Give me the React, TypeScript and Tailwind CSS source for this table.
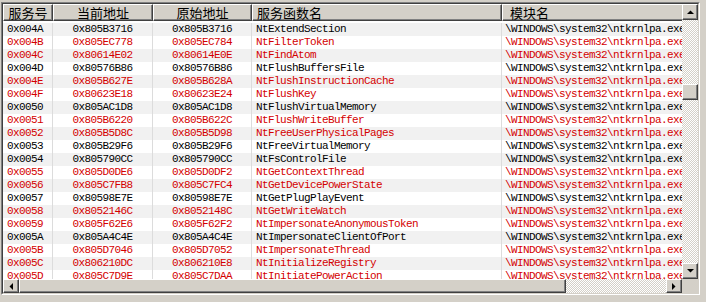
import React from "react";

type Row = { id: string; cur: string; orig: string; name: string };

const rows: Row[] = [
  { id: "0x004A", cur: "0x805B3716", orig: "0x805B3716", name: "NtExtendSection" },
  { id: "0x004B", cur: "0x805EC778", orig: "0x805EC784", name: "NtFilterToken" },
  { id: "0x004C", cur: "0x80614E02", orig: "0x80614E0E", name: "NtFindAtom" },
  { id: "0x004D", cur: "0x80576B86", orig: "0x80576B86", name: "NtFlushBuffersFile" },
  { id: "0x004E", cur: "0x805B627E", orig: "0x805B628A", name: "NtFlushInstructionCache" },
  { id: "0x004F", cur: "0x80623E18", orig: "0x80623E24", name: "NtFlushKey" },
  { id: "0x0050", cur: "0x805AC1D8", orig: "0x805AC1D8", name: "NtFlushVirtualMemory" },
  { id: "0x0051", cur: "0x805B6220", orig: "0x805B622C", name: "NtFlushWriteBuffer" },
  { id: "0x0052", cur: "0x805B5D8C", orig: "0x805B5D98", name: "NtFreeUserPhysicalPages" },
  { id: "0x0053", cur: "0x805B29F6", orig: "0x805B29F6", name: "NtFreeVirtualMemory" },
  { id: "0x0054", cur: "0x805790CC", orig: "0x805790CC", name: "NtFsControlFile" },
  { id: "0x0055", cur: "0x805D0DE6", orig: "0x805D0DF2", name: "NtGetContextThread" },
  { id: "0x0056", cur: "0x805C7FB8", orig: "0x805C7FC4", name: "NtGetDevicePowerState" },
  { id: "0x0057", cur: "0x80598E7E", orig: "0x80598E7E", name: "NtGetPlugPlayEvent" },
  { id: "0x0058", cur: "0x8052146C", orig: "0x8052148C", name: "NtGetWriteWatch" },
  { id: "0x0059", cur: "0x805F62E6", orig: "0x805F62F2", name: "NtImpersonateAnonymousToken" },
  { id: "0x005A", cur: "0x805A4C4E", orig: "0x805A4C4E", name: "NtImpersonateClientOfPort" },
  { id: "0x005B", cur: "0x805D7046", orig: "0x805D7052", name: "NtImpersonateThread" },
  { id: "0x005C", cur: "0x806210DC", orig: "0x806210E8", name: "NtInitializeRegistry" },
  { id: "0x005D", cur: "0x805C7D9E", orig: "0x805C7DAA", name: "NtInitiatePowerAction" },
];

const mono = "font-['SimSun','Liberation_Mono',monospace] text-[11px] tracking-[-0.6px] leading-[13px]";
const cjk = "font-['Noto_Sans_CJK_SC',sans-serif] text-[13px] leading-[16px]";
const track = "bg-[repeating-conic-gradient(#d4d0c8_0_25%,#ffffff_0_50%)] bg-[length:2px_2px]";
const raised = "bg-[#d4d0c8] border border-t-white border-l-white border-r-[#404040] border-b-[#404040] shadow-[inset_-1px_-1px_0_#808080]";

function Arrow({ dir }: { dir: "up" | "down" | "left" | "right" }) {
  const pts = {
    up: "0,4 3.5,0.5 7,4",
    down: "0,0 3.5,3.5 7,0",
    left: "4,0 0.5,3.5 4,7",
    right: "0,0 3.5,3.5 0,7",
  }[dir];
  const vert = dir === "up" || dir === "down";
  return (
    <svg width={vert ? 7 : 4} height={vert ? 4 : 7}>
      <polygon points={pts} fill="#000" />
    </svg>
  );
}

function Btn({ dir, cls }: { dir: "up" | "down" | "left" | "right"; cls: string }) {
  return (
    <div className={`${raised} ${cls} flex items-center justify-center shrink-0`}>
      <Arrow dir={dir} />
    </div>
  );
}

export default function App() {
  return (
    <div className="w-[706px] h-[302px] bg-[#d4d0c8] pt-[2px] pl-[1px] overflow-hidden">
      <div className="w-[699px] h-[293px] border border-t-[#808080] border-l-[#808080] border-r-white border-b-white">
        <div className="grid grid-cols-[679px_16px] grid-rows-[275px_14px] w-[697px] h-[291px] border border-t-[#404040] border-l-[#404040] border-r-[#d4d0c8] border-b-[#d4d0c8]">
          {/* list */}
          <div className="overflow-hidden bg-white">
            <div className="w-[760px]">
              <div className={`flex h-[17px] ${cjk} text-black`}>
                <div className={`${raised} w-[50px] flex items-center justify-center`}>服务号</div>
                <div className={`${raised} w-[100px] flex items-center justify-center`}>当前地址</div>
                <div className={`${raised} w-[99px] flex items-center justify-center`}>原始地址</div>
                <div className={`${raised} w-[250px] flex items-center pl-[4px]`}>服务函数名</div>
                <div className={`${raised} w-[250px] flex items-center pl-[7px]`}>模块名</div>
              </div>
              {rows.map((r, i) => {
                const red = r.cur !== r.orig;
                return (
                  <div
                    key={r.id}
                    className={`flex h-[13px] ${mono} ${red ? "text-[#d40000]" : "text-black"} ${i % 2 === 0 ? "bg-[#f1f1f1]" : "bg-white"} ${i === 0 ? "mt-[2px]" : ""}`}
                  >
                    <div className="w-[50px] pl-[4px] border-r border-[#dcdcdc] whitespace-nowrap">{r.id}</div>
                    <div className="w-[100px] text-center border-r border-[#dcdcdc] whitespace-nowrap">{r.cur}</div>
                    <div className="w-[99px] text-center border-r border-[#dcdcdc] whitespace-nowrap">{r.orig}</div>
                    <div className="w-[250px] pl-[4px] border-r border-[#dcdcdc] whitespace-nowrap">{r.name}</div>
                    <div className="w-[250px] pl-[3px] whitespace-nowrap">\WINDOWS\system32\ntkrnlpa.exe</div>
                  </div>
                );
              })}
            </div>
          </div>
          {/* vertical scrollbar */}
          <div className={`flex flex-col ${track}`}>
            <Btn dir="up" cls="h-[16px] w-[16px]" />
            <div className="h-[64px]" />
            <div className={`${raised} h-[16px] w-[16px]`} />
            <div className="flex-1" />
            <Btn dir="down" cls="h-[16px] w-[16px]" />
          </div>
          {/* horizontal scrollbar */}
          <div className={`flex ${track}`}>
            <Btn dir="left" cls="w-[16px] h-[14px]" />
            <div className={`${raised} w-[547px] h-[14px]`} />
            <div className="flex-1" />
            <Btn dir="right" cls="w-[16px] h-[14px]" />
          </div>
          <div className="bg-[#d4d0c8]" />
        </div>
      </div>
    </div>
  );
}
